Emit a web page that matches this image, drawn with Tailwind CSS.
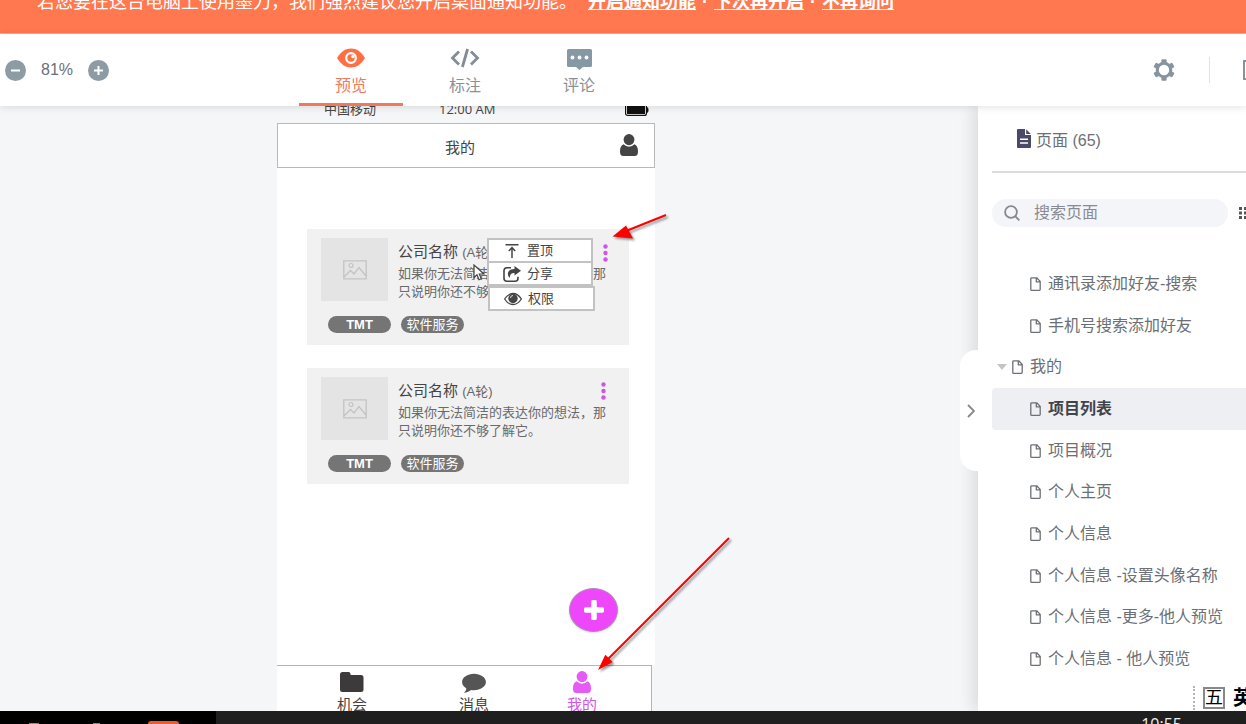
<!DOCTYPE html>
<html lang="zh-CN">
<head>
<meta charset="utf-8">
<title>墨刀 - 预览</title>
<script src="https://cdn.jsdelivr.net/npm/@tailwindcss/browser@4"></script>
</head>
<body class="flex h-screen flex-col overflow-hidden bg-[#f5f6f8] font-['Liberation_Sans','Noto_Sans_CJK_SC',sans-serif] text-base text-[#6b6f76]">

<svg class="hidden" aria-hidden="true">
  <symbol id="page" viewBox="0 0 11 14"><path d="M1.7.8h5l3.500 3.600v8.100a.8.8 0 0 1-.8.8H1.700a.9.9 0 0 1-.9-.9V1.700a.9.9 0 0 1 .9-.9zM6.300 1v3.800h3.800" fill="none" stroke="currentColor" stroke-width="1.300" stroke-linejoin="round"/></symbol>
  <symbol id="user" viewBox="0 0 18 22"><ellipse cx="9" cy="5.600" rx="5.400" ry="5.600"/><path d="M3.600 10.200C1.200 11 0 13.500 0 17.500 0 20.500 1 22 3.500 22h11c2.500 0 3.500-1.500 3.500-4.500 0-4-1.200-6.500-3.600-7.300a7.200 7.200 0 0 1-10.800 0z"/></symbol>
  <symbol id="image" viewBox="0 0 24 20"><path d="M.8.8h22.400v18H.8zM1 17l6.500-6.500 3.500 3.500 5-6.500 7 8.500" fill="none" stroke="currentColor" stroke-width="1.300"/><circle cx="8" cy="5.500" r="2" fill="none" stroke="currentColor" stroke-width="1.200"/></symbol>
  <symbol id="dots" viewBox="0 0 5 18"><circle cx="2.500" cy="2.500" r="2.200"/><circle cx="2.500" cy="9" r="2.200"/><circle cx="2.500" cy="15.500" r="2.200"/></symbol>
</svg>

<div class="flex h-[34px] shrink-0 items-end overflow-hidden border-b border-[#ffa98c] bg-[#ff784f] pb-[19px] pl-[37px] text-lg leading-6 whitespace-nowrap text-white">
  <p>若您要在这台电脑上使用墨刀，我们强烈建议您开启桌面通知功能。</p>
  <p class="ml-[11px] flex font-bold">
    <a href="#" class="underline">开启通知功能</a><span class="w-[18px] text-center">·</span><a href="#" class="underline">下次再开启</a><span class="w-[18px] text-center">·</span><a href="#" class="underline">不再询问</a>
  </p>
</div>

<header class="relative z-10 flex h-[72px] shrink-0 items-center bg-white shadow-[0_1px_8px_rgba(0,0,0,0.12)]">
  <div class="flex w-[299px] items-center pl-[5px]">
    <button aria-label="缩小"><svg class="block size-[21px]" viewBox="0 0 21 21"><circle cx="10.500" cy="10.500" r="10.500" fill="#8d9ba5"/><path d="M6 10.500h9" stroke="#fff" stroke-width="2"/></svg></button>
    <span class="w-[62px] text-center">81%</span>
    <button aria-label="放大"><svg class="block size-[21px]" viewBox="0 0 21 21"><circle cx="10.500" cy="10.500" r="10.500" fill="#8d9ba5"/><path d="M6 10.500h9M10.500 6v9" stroke="#fff" stroke-width="2"/></svg></button>
  </div>
  <nav class="flex gap-2.5 self-stretch text-[#8b9097]">
    <button class="flex w-[104px] flex-col items-center border-b-3 border-[#f0795c] pt-3.5 text-[#f0795c]">
      <svg class="h-5 w-7" viewBox="0 0 28 20"><path d="M0 10C4 3.500 8.500.5 14 .5S24 3.500 28 10c-4 6.500-8.500 9.500-14 9.500S4 16.500 0 10z" fill="#ff6f43"/><circle cx="14" cy="10" r="4.800" fill="none" stroke="#fff" stroke-width="2.200"/><circle cx="15.800" cy="8.600" r="1.700" fill="#fff"/></svg>
      <span class="mt-1.5 leading-6">预览</span>
    </button>
    <button class="flex w-[104px] flex-col items-center border-b-3 border-transparent pt-3.5">
      <svg class="h-5 w-[30px]" viewBox="0 0 30 20" fill="none" stroke="#838b95" stroke-width="2.800"><path d="M9 3.500 2.500 10 9 16.500M21 3.500l6.500 6.500-6.500 6.500M17.600 1l-5.200 18"/></svg>
      <span class="mt-1.5 leading-6">标注</span>
    </button>
    <button class="flex w-[104px] flex-col items-center border-b-3 border-transparent pt-3.5">
      <svg class="h-[22px] w-[25px]" viewBox="0 0 25 22"><path d="M1.500 1h22A1.500 1.500 0 0 1 25 2.500v15a1.500 1.500 0 0 1-1.500 1.500H16l-3.500 3L9 19H1.500A1.500 1.500 0 0 1 0 17.500v-15A1.500 1.500 0 0 1 1.500 1z" fill="#8798a5"/><g fill="#fff"><circle cx="5.500" cy="9.500" r="1.900"/><circle cx="12.500" cy="9.500" r="1.900"/><circle cx="19.500" cy="9.500" r="1.900"/></g></svg>
      <span class="mt-1 leading-6">评论</span>
    </button>
  </nav>
  <div class="ml-auto flex items-center text-[#87949e]">
    <button aria-label="设置"><svg class="block size-[22px]" viewBox="0 0 22 22"><g fill="currentColor"><circle cx="11" cy="11" r="8.300"/><g id="tooth"><rect x="8.400" y=".3" width="5.200" height="21.400" rx="1"/></g><use href="#tooth" transform="rotate(60 11 11)"/><use href="#tooth" transform="rotate(120 11 11)"/></g><circle cx="11" cy="11" r="5.200" fill="#fff"/></svg></button>
    <span class="ml-[34px] h-[26px] w-px bg-[#e0e2e5]"></span>
    <button aria-label="全屏" class="ml-[33px] h-5 w-[3px] border-y-2 border-l-2 border-current"></button>
  </div>
</header>

<main class="flex min-h-0 flex-1 overflow-hidden">
  <section class="flex min-w-0 flex-1 justify-center pr-[46px]">
    <div class="relative flex w-[378px] flex-col text-[#444]">
      <div class="-mt-2.5 flex h-[27px] shrink-0 items-center pr-1.5 pl-[47px] font-['Open_Sans','Noto_Sans_CJK_SC',sans-serif] text-[13px]">
        <span class="w-[115px]">中国移动</span><span>12:00 AM</span>
        <svg class="ml-auto h-3 w-6" viewBox="0 0 24 12"><rect x=".6" y=".6" width="20.800" height="10.800" rx="2" fill="#fff" stroke="#111" stroke-width="1.200"/><rect x="2" y="2" width="18" height="8" fill="#111"/><path d="M22 3c2 .5 2 5.500 0 6z" fill="#111"/></svg>
      </div>
      <div class="flex h-[45px] shrink-0 items-center border border-[#b9b9bc] bg-white pr-4 text-[#444]">
        <h1 class="ml-[167px] flex-1 pt-1.5 text-[15px]">我的</h1>
        <button aria-label="个人中心"><svg class="mb-0.5 block h-[22px] w-[18px] fill-[#444]"><use href="#user"/></svg></button>
      </div>

      <div class="flex flex-1 flex-col gap-[23px] bg-white pr-[26px] pl-[30px] pt-[61px]">
        <article class="relative h-[116px] bg-[#f1f1f1] pt-[9px] pl-3.5 whitespace-nowrap">
          <div class="flex gap-2.5">
            <div class="grid h-[63px] w-[67px] place-items-center bg-[#e4e4e4] text-[#c3c3c5]"><svg class="h-5 w-6"><use href="#image"/></svg></div>
            <div class="text-[13px] leading-[18px] text-[#6a6a6a]">
              <h2 class="pt-0.5 text-[15px] leading-6 text-[#444]">公司名称 <small class="text-[13px] text-[#666]">(A轮)</small></h2>
              <p>如果你无法简洁的表达你的想法，那<br>只说明你还不够了解它。</p>
            </div>
          </div>
          <div class="mt-[15px] flex gap-2.5 pl-[7px] text-center text-[13px] leading-[17px] text-white">
            <span class="w-[63px] rounded-full bg-[#757575] font-bold">TMT</span><span class="w-[63px] rounded-full bg-[#757575]">软件服务</span>
          </div>
          <button aria-label="更多" class="absolute top-[15px] left-[296px]"><svg class="block h-[18px] w-[5px] fill-[#cf55e6]"><use href="#dots"/></svg></button>
          <div class="absolute top-[9px] left-[180px] flex w-[106px] flex-col text-[13px] text-[#444]">
            <button class="flex h-[25px] items-center gap-1.5 border-2 border-[#c2c2c2] bg-white pl-3.5">
              <svg class="h-4 w-[18px]" viewBox="0 0 18 16" fill="none" stroke="#444" stroke-width="1.500"><path d="M2.500 1.700h13M9 15V5M5.800 8 9 4.600 12.200 8"/></svg>置顶
            </button>
            <button class="-mt-0.5 flex h-[25px] items-center gap-1.5 border-2 border-[#c2c2c2] bg-white pl-3.5">
              <svg class="h-4 w-[18px]" viewBox="0 0 18 16"><path d="M8 1.800H4A3 3 0 0 0 1 4.800v7.400a3 3 0 0 0 3 3h8a3 3 0 0 0 3-3v-1.500" fill="none" stroke="#444" stroke-width="1.600"/><path d="M11.500 0 18 4.800l-6.500 4.700V7C8.500 7 7 8 6.800 12 5 10 4.500 8.300 5.200 6.300 6 4 8.500 3 11.500 3z" fill="#444"/></svg>分享
            </button>
            <button class="ml-px flex h-[25px] w-[107px] items-center gap-1.5 border-2 border-[#c2c2c2] bg-white pl-3.5">
              <svg class="h-4 w-[18px]" viewBox="0 0 18 16"><path d="M.6 8C3 4.300 5.600 2.500 9 2.500S15 4.300 17.400 8C15 11.700 12.400 13.500 9 13.500S3 11.700.6 8z" fill="#fff" stroke="#444" stroke-width="1.300"/><circle cx="9" cy="7.500" r="4.700" fill="#444"/><path d="M6.500 7A2.500 2.500 0 0 1 9 4.500" fill="none" stroke="#ddd"/></svg>权限
            </button>
          </div>
          <svg class="absolute top-[35px] left-[166px] h-[17px] w-3" viewBox="0 0 12 17"><path d="M1 1v12.500l3-2.800 2 5 2.300-1-2-4.700H11z" fill="#fff" stroke="#444" stroke-width="1.200"/></svg>
        </article>

        <article class="relative h-[116px] bg-[#f1f1f1] pt-[9px] pl-3.5 whitespace-nowrap">
          <div class="flex gap-2.5">
            <div class="grid h-[63px] w-[67px] place-items-center bg-[#e4e4e4] text-[#c3c3c5]"><svg class="h-5 w-6"><use href="#image"/></svg></div>
            <div class="text-[13px] leading-[18px] text-[#6a6a6a]">
              <h2 class="pt-0.5 text-[15px] leading-6 text-[#444]">公司名称 <small class="text-[13px] text-[#666]">(A轮)</small></h2>
              <p>如果你无法简洁的表达你的想法，那<br>只说明你还不够了解它。</p>
            </div>
          </div>
          <div class="mt-[15px] flex gap-2.5 pl-[7px] text-center text-[13px] leading-[17px] text-white">
            <span class="w-[63px] rounded-full bg-[#757575] font-bold">TMT</span><span class="w-[63px] rounded-full bg-[#757575]">软件服务</span>
          </div>
          <button aria-label="更多" class="absolute top-[14px] left-[294px]"><svg class="block h-[18px] w-[5px] fill-[#cf55e6]"><use href="#dots"/></svg></button>
        </article>
      </div>

      <nav class="mr-[3px] flex h-[46px] shrink-0 overflow-hidden border-t border-r border-[#b4b4b4] bg-white pt-[5px] pl-[53px] text-[15px] leading-6">
        <a href="#" class="mr-[78px] flex w-11 flex-col items-center"><svg class="h-[22px] w-6 shrink-0" viewBox="0 0 24 22"><path d="M2.500 1h6c1.500 0 2 1 2.200 3H21a2.500 2.500 0 0 1 2.500 2.500v12A2.500 2.500 0 0 1 21 21H2.500A2.500 2.500 0 0 1 0 18.500v-15A2.500 2.500 0 0 1 2.500 1z" fill="#3c3a3b"/></svg>机会</a>
        <a href="#" class="mr-16 flex w-11 flex-col items-center"><svg class="h-[22px] w-[26px] shrink-0" viewBox="0 0 26 24"><path d="M13 3c7 0 13 4 13 9s-6 9-13 9c-1 0-2-.1-3-.3C7.500 22.500 5 23.500 2 23.800c2-1.800 2.700-3.300 2.600-4.900C1.700 17.200 0 15 0 12c0-5 6-9 13-9z" fill="#555"/></svg>消息</a>
        <a href="#" class="flex w-11 flex-col items-center text-[#cf55e6]"><svg class="h-[22px] w-[18px] shrink-0 fill-[#e65af5]"><use href="#user"/></svg>我的</a>
      </nav>

      <button aria-label="新建" class="absolute top-[482px] left-[292px] grid h-11 w-[49px] place-items-center rounded-[50%] border border-[#b08ab5] bg-[#ee46fb] shadow-sm"><svg class="size-5" viewBox="0 0 20 20"><path d="M10 2v16M2 10h16" stroke="#fff" stroke-width="5.500" stroke-linecap="round"/></svg></button>

      <svg class="pointer-events-none absolute top-px left-0 h-full w-full overflow-visible drop-shadow-[2px_2px_1px_rgba(0,0,0,0.4)]" fill="#f00" stroke="#f00" stroke-width="2">
        <path d="M389 108 349 124M452 431 329 554"/>
        <path d="M335.500 129.500 349 118.500l7 13zM321 563l7.300-15.300 7.400 7.300z" stroke="none"/>
      </svg>
    </div>
  </section>

  <aside class="relative w-[268px] shrink-0 bg-white shadow-[-6px_0_14px_rgba(0,0,0,0.10)]">
    <button aria-label="收起" class="absolute top-[244px] -left-[18px] grid h-[121px] w-[18px] place-items-center rounded-l-2xl bg-white"><svg class="ml-1 h-3.5 w-2" viewBox="0 0 8 14" fill="none" stroke="#85888d" stroke-width="1.800"><path d="m1 1 6 6-6 6"/></svg></button>
    <div class="ml-3.5 flex h-[67px] items-center gap-[5px] border-b-2 border-[#dcdcde] pt-1 pl-[25px]">
      <svg class="mb-1 h-[19px] w-[14px]" viewBox="0 0 14 19"><path d="M1 0h7v6h6v12a1 1 0 0 1-1 1H1a1 1 0 0 1-1-1V1a1 1 0 0 1 1-1z" fill="#4a4a68"/><path d="m9.200.3 4.600 4.600H9.200z" fill="#4a4a68"/><path d="M3 10.200h8M3 14h8" stroke="#fff" stroke-width="1.400"/></svg>
      <h2>页面 (65)</h2>
    </div>
    <div class="mt-[26px] ml-3.5 flex items-center overflow-hidden">
      <label class="flex h-7 w-[236px] shrink-0 items-center gap-3.5 rounded-full bg-[#f4f5f9] pl-3">
        <svg class="size-4 shrink-0" viewBox="0 0 16 16" fill="none" stroke="#85888f" stroke-width="1.800"><circle cx="7" cy="7" r="5.900"/><path d="m11.300 11.300 4 4"/></svg>
        <input type="search" aria-label="搜索页面" placeholder="搜索页面" class="w-40 bg-transparent outline-none placeholder:text-[#898b92]">
      </label>
      <button aria-label="列表视图" class="ml-[11px] shrink-0"><svg class="block h-3 w-[13px] fill-[#555]" viewBox="0 0 13 12"><path d="M0 0h3v3H0zM5 0h3v3H5zM10 0h3v3h-3zM0 4.500h3v3H0zM5 4.500h3v3H5zM10 4.500h3v3h-3zM0 9h3v3H0zM5 9h3v3H5zM10 9h3v3h-3z"/></svg></button>
    </div>
    <ul class="mt-9 ml-3.5 grid h-[417px] auto-rows-fr whitespace-nowrap">
      <li><a href="#" class="flex h-full items-center gap-[7px] pl-[38px]"><svg class="h-3.5 w-[11px]"><use href="#page"/></svg>通讯录添加好友-搜索</a></li>
      <li><a href="#" class="flex h-full items-center gap-[7px] pl-[38px]"><svg class="h-3.5 w-[11px]"><use href="#page"/></svg>手机号搜索添加好友</a></li>
      <li><a href="#" class="flex h-full items-center gap-[7px] pl-[5px]"><svg class="-mr-0.5 h-1.5 w-2.5" viewBox="0 0 10 6"><path d="M0 0h10L5 6z" fill="#c3c5c8"/></svg><svg class="h-3.5 w-[11px]"><use href="#page"/></svg>我的</a></li>
      <li><a href="#" aria-current="page" class="flex h-full items-center gap-[7px] rounded-l-sm bg-[#eeeff2] pl-[38px] font-bold text-[#3f444d]"><svg class="h-3.5 w-[11px] text-[#6b6f76]"><use href="#page"/></svg>项目列表</a></li>
      <li><a href="#" class="flex h-full items-center gap-[7px] pl-[38px]"><svg class="h-3.5 w-[11px]"><use href="#page"/></svg>项目概况</a></li>
      <li><a href="#" class="flex h-full items-center gap-[7px] pl-[38px]"><svg class="h-3.5 w-[11px]"><use href="#page"/></svg>个人主页</a></li>
      <li><a href="#" class="flex h-full items-center gap-[7px] pl-[38px]"><svg class="h-3.5 w-[11px]"><use href="#page"/></svg>个人信息</a></li>
      <li><a href="#" class="flex h-full items-center gap-[7px] pl-[38px]"><svg class="h-3.5 w-[11px]"><use href="#page"/></svg>个人信息 -设置头像名称</a></li>
      <li><a href="#" class="flex h-full items-center gap-[7px] pl-[38px]"><svg class="h-3.5 w-[11px]"><use href="#page"/></svg>个人信息 -更多-他人预览</a></li>
      <li><a href="#" class="flex h-full items-center gap-[7px] pl-[38px]"><svg class="h-3.5 w-[11px]"><use href="#page"/></svg>个人信息 - 他人预览</a></li>
    </ul>
    <div class="absolute right-0 bottom-0 flex h-7 w-[53px] items-center overflow-hidden bg-white pt-1 pb-0.5 text-black">
      <span class="h-6 w-0.5 shrink-0 border-l-2 border-dotted border-[#b5b5b5]"></span>
      <span class="ml-2 grid size-[22px] shrink-0 place-items-center border-2 border-[#888] text-lg leading-none">五</span>
      <span class="ml-2 shrink-0 text-xl leading-6 font-bold">英</span>
    </div>
  </aside>
</main>

<footer class="flex h-[13px] shrink-0 overflow-hidden bg-[#1f1f20]">
  <div class="flex w-[216px] items-end bg-black">
    <span class="ml-[29px] h-px w-2.5 bg-[#b87a50]"></span>
    <span class="ml-[54px] h-px w-[7px] bg-[#8a8a8a]"></span>
    <span class="ml-12 h-[3px] w-[31px] rounded-t bg-[#f0592b]"></span>
  </div>
  <time class="mt-[3px] mr-16 ml-auto font-['Open_Sans',sans-serif] text-base leading-5 text-[#eee]">10:55</time>
</footer>
</body>
</html>
